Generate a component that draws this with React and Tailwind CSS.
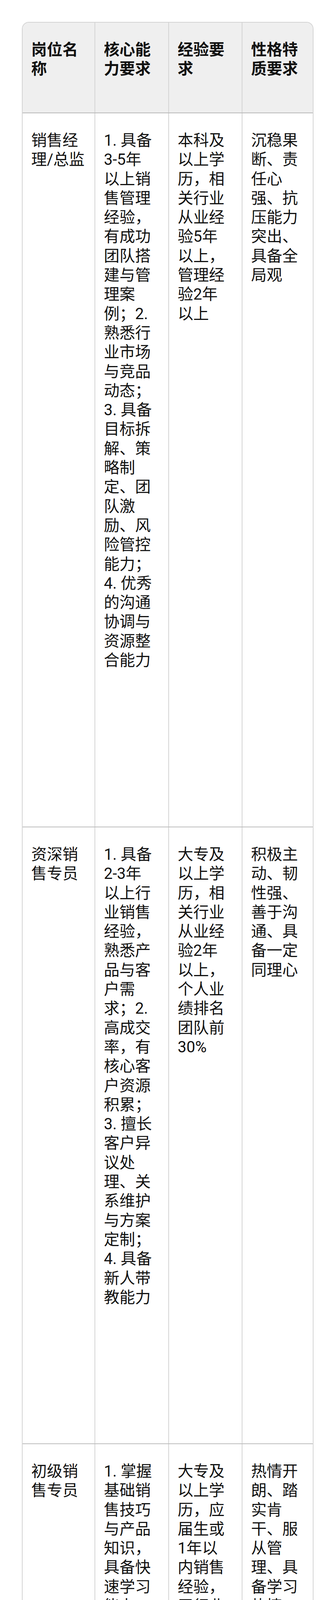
import React from "react";

const header = [
  ["岗位名", "称"],
  ["核心能", "力要求"],
  ["经验要", "求"],
  ["性格特", "质要求"],
];

const rows = [
  {
    h: "h-[1828px] border-b-2",
    cells: [
      ["销售经", "理/总监"],
      [
        "1. 具备", "3-5年", "以上销", "售管理", "经验，", "有成功", "团队搭", "建与管", "理案", "例；2.",
        "熟悉行", "业市场", "与竞品", "动态；", "3. 具备", "目标拆", "解、策", "略制", "定、团", "队激",
        "励、风", "险管控", "能力；", "4. 优秀", "的沟通", "协调与", "资源整", "合能力",
      ],
      ["本科及", "以上学", "历，相", "关行业", "从业经", "验5年", "以上，", "管理经", "验2年", "以上"],
      ["沉稳果", "断、责", "任心", "强、抗", "压能力", "突出、", "具备全", "局观"],
    ],
  },
  {
    h: "h-[1579px] border-b-2",
    cells: [
      ["资深销", "售专员"],
      [
        "1. 具备", "2-3年", "以上行", "业销售", "经验，", "熟悉产", "品与客", "户需", "求；2.", "高成交",
        "率，有", "核心客", "户资源", "积累；", "3. 擅长", "客户异", "议处", "理、关", "系维护", "与方案",
        "定制；", "4. 具备", "新人带", "教能力",
      ],
      ["大专及", "以上学", "历，相", "关行业", "从业经", "验2年", "以上，", "个人业", "绩排名", "团队前", "30%"],
      ["积极主", "动、韧", "性强、", "善于沟", "通、具", "备一定", "同理心"],
    ],
  },
  {
    h: "h-[1398px] border-b-2",
    cells: [
      ["初级销", "售专员"],
      [
        "1. 掌握", "基础销", "售技巧", "与产品", "知识，", "具备快", "速学习", "能力；", "2. 执行", "力强，",
        "能完成", "基础客", "户拜访", "与邀约", "任务；", "3. 具备", "基础沟", "通表达", "能力与", "抗压能", "力",
      ],
      ["大专及", "以上学", "历，应", "届生或", "1年以", "内销售", "经验，", "无行业", "经验可", "接受系", "统培训"],
      ["热情开", "朗、踏", "实肯", "干、服", "从管", "理、具", "备学习", "热情"],
    ],
  },
  {
    h: "h-[1395px] border-b-2",
    cells: [
      ["销售支", "持"],
      [
        "1. 熟悉", "办公软", "件", "（Excel", "、", "PPT、", "Word）", "，能快", "速制作", "销售方",
        "案与资", "料；2.", "具备基", "础行业", "知识与", "客户沟", "通能", "力；3.", "细心严", "谨，执", "行力强",
      ],
      ["大专及", "以上学", "历，", "1-2年", "相关工", "作经", "验，行", "政、市", "场、销", "售支持", "相关经", "验优先"],
      ["细致耐", "心、责", "任心", "强、沟", "通顺", "畅、具", "备协作", "意识"],
    ],
  },
  {
    h: "h-[1309px]",
    cells: [
      ["行业方", "案顾问"],
      [
        "1. 具备", "3年以", "上行业", "经验，", "熟悉行", "业痛点", "与解决", "方案；", "2. 具备", "专业技",
        "术素养", "或行业", "认知；", "3. 擅长", "方案撰", "写、客", "户技术", "沟通；", "4. 具备", "跨部门", "协作能", "力",
      ],
      ["本科及", "以上学", "历，相", "关行业", "从业经", "验3年", "以上，", "技术背", "景或行", "业研究", "背景优", "先"],
      ["严谨专", "业、逻", "辑清", "晰、善", "于表", "达、具", "备客户", "服务意", "识"],
    ],
  },
];

function Cell({ lines, first, bold }) {
  return (
    <div
      className={
        "pt-[45px] pl-[22px] " +
        (first ? "" : "border-l-2 border-[#d4d4d4] ") +
        (bold ? "font-bold" : "font-normal")
      }
    >
      {lines.map((l, i) => (
        <div key={i} className="whitespace-nowrap">
          {l}
        </div>
      ))}
    </div>
  );
}

export default function App() {
  return (
    <div className="h-[7799px] overflow-hidden bg-white pt-[56px] font-['Roboto','Noto_Sans_CJK_SC',sans-serif] text-[40px] leading-[49.3px] text-[#111111]">
      <div className="ml-[56px] w-[747px] overflow-hidden rounded-t-[18px] border-2 border-b-0 border-[#d4d4d4]">
        <div className="grid h-[232px] grid-cols-[184px_189px_188px_182px] border-b-2 border-[#b9b9b9] bg-[#efefef]">
          {header.map((c, i) => (
            <Cell key={i} lines={c} first={i === 0} bold />
          ))}
        </div>
        {rows.map((r, ri) => (
          <div
            key={ri}
            className={"grid grid-cols-[184px_189px_188px_182px] border-[#bdbdbd] " + r.h}
          >
            {r.cells.map((c, i) => (
              <Cell key={i} lines={c} first={i === 0} />
            ))}
          </div>
        ))}
      </div>
    </div>
  );
}
